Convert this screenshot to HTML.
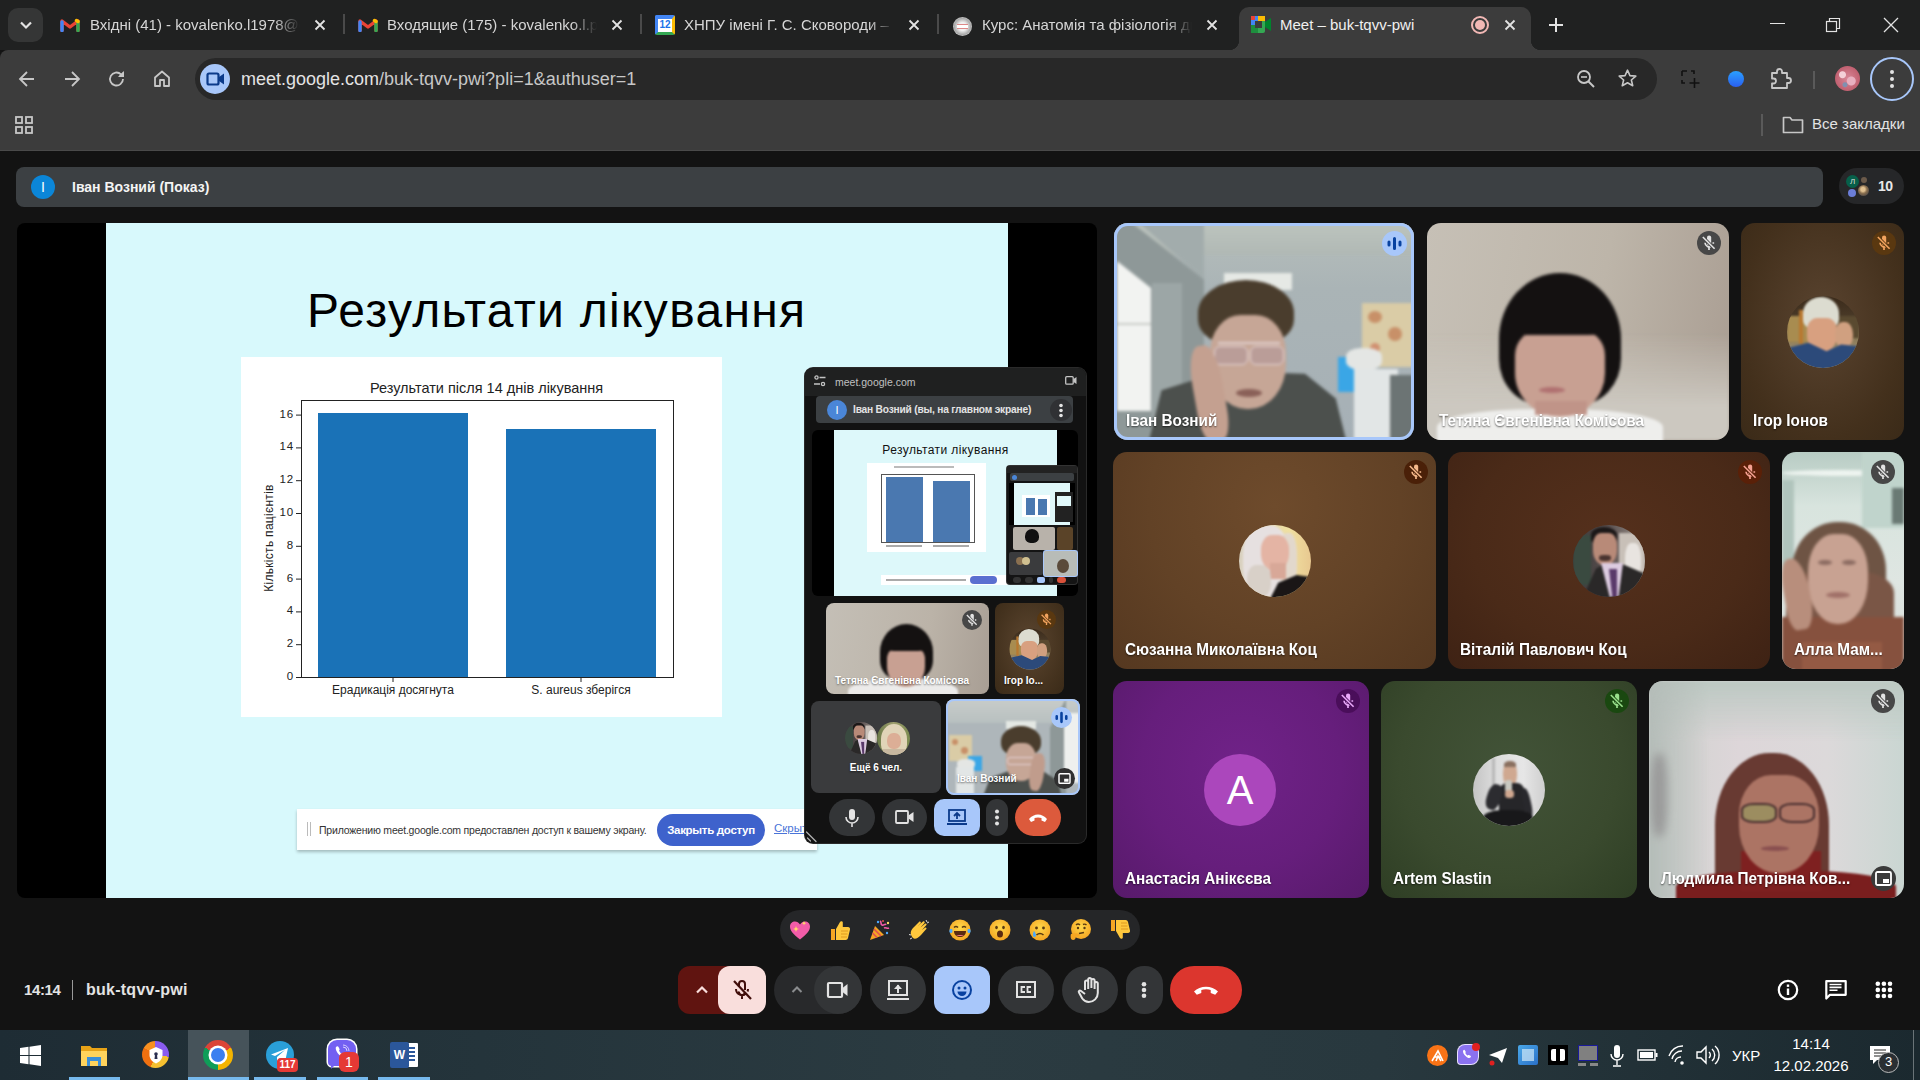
<!DOCTYPE html>
<html><head><meta charset="utf-8">
<style>
*{box-sizing:border-box;margin:0;padding:0}
html,body{width:1920px;height:1080px;overflow:hidden;background:#131313;font-family:"Liberation Sans",sans-serif}
.abs{position:absolute}
#tabs{left:0;top:0;width:1920px;height:50px;background:#202121}
#toolbar{left:0;top:50px;width:1920px;height:100px;background:#3c3c3c;border-top-left-radius:8px}
#meet{left:0;top:150px;width:1920px;height:880px;background:#131313}
#taskbar{left:0;top:1030px;width:1920px;height:50px;background:linear-gradient(90deg,#1e2c34 0%,#24343b 25%,#2b3b41 50%,#28383e 72%,#1b292f 100%)}
.tabtitle{color:#d6d6d6;font-size:15px;white-space:nowrap;overflow:hidden}
.x{color:#e3e3e3;font-size:18px}
.tile{border-radius:14px;overflow:hidden}
.av{width:72px;height:72px;border-radius:50%;overflow:hidden}
.name{font-size:17px;font-weight:bold;color:#fff;white-space:nowrap;text-shadow:0 1px 2px rgba(0,0,0,.6);transform:scaleX(0.9);transform-origin:0 0;line-height:20px}
.mute{width:24px;height:24px;border-radius:50%}
.mute svg{display:block}
.pname{font-size:10px;font-weight:bold;color:#fff;white-space:nowrap;text-shadow:0 1px 2px rgba(0,0,0,.5)}
.emo{font-size:24px;line-height:28px;width:26px;text-align:center}
.ytk{right:0;font-size:11.5px;letter-spacing:0.8px;color:#222;line-height:14px;text-align:right;white-space:nowrap}
</style></head><body>
<div id="tabs" class="abs">
  <div class="abs" style="left:8px;top:8px;width:35px;height:34px;border-radius:10px;background:#353636"></div>
  <svg class="abs" style="left:16px;top:16px" width="20" height="18" viewBox="0 0 20 18"><path d="M5 6.5l5 5 5-5" fill="none" stroke="#e3e3e3" stroke-width="2.2"/></svg>
  <!-- gmail icons -->
  <svg class="abs" style="left:60px;top:18px" width="20" height="14" viewBox="0 0 20 14"><path d="M2 12.5V3L10 9 18 3v9.5" fill="none" stroke="#ea4335" stroke-width="3.4" stroke-linejoin="round" stroke-linecap="round"/><path d="M2 12.5V4" stroke="#4285f4" stroke-width="3.4" stroke-linecap="round"/><path d="M18 12.5V4" stroke="#34a853" stroke-width="3.4" stroke-linecap="round"/><path d="M16.5 2.5L18 3.5" stroke="#fbbc04" stroke-width="3.4" stroke-linecap="round"/></svg>
  <div class="abs tabtitle" style="left:90px;top:16px;width:210px;-webkit-mask-image:linear-gradient(90deg,#000 88%,transparent)">Вхідні (41) - kovalenko.l1978@gmail</div>
  <svg class="abs x1" style="left:313px;top:18px" width="14" height="14" viewBox="0 0 14 14"><path d="M2.5 2.5l9 9M11.5 2.5l-9 9" stroke="#e3e3e3" stroke-width="1.8"/></svg>
  <div class="abs" style="left:343px;top:14px;width:2px;height:20px;background:#4a4a4a"></div>
  <svg class="abs" style="left:358px;top:18px" width="20" height="14" viewBox="0 0 20 14"><path d="M2 12.5V3L10 9 18 3v9.5" fill="none" stroke="#ea4335" stroke-width="3.4" stroke-linejoin="round" stroke-linecap="round"/><path d="M2 12.5V4" stroke="#4285f4" stroke-width="3.4" stroke-linecap="round"/><path d="M18 12.5V4" stroke="#34a853" stroke-width="3.4" stroke-linecap="round"/><path d="M16.5 2.5L18 3.5" stroke="#fbbc04" stroke-width="3.4" stroke-linecap="round"/></svg>
  <div class="abs tabtitle" style="left:387px;top:16px;width:210px;-webkit-mask-image:linear-gradient(90deg,#000 88%,transparent)">Входящие (175) - kovalenko.l.p</div>
  <svg class="abs" style="left:610px;top:18px" width="14" height="14" viewBox="0 0 14 14"><path d="M2.5 2.5l9 9M11.5 2.5l-9 9" stroke="#e3e3e3" stroke-width="1.8"/></svg>
  <div class="abs" style="left:640px;top:14px;width:2px;height:20px;background:#4a4a4a"></div>
  <!-- calendar icon -->
  <div class="abs" style="left:655px;top:15px;width:20px;height:20px;background:#fff;border-radius:2px;border-top:4px solid #4285f4;border-left:3px solid #4285f4;border-bottom:3px solid #34a853;border-right:3px solid #fbbc04"></div>
  <div class="abs" style="left:658px;top:18px;width:14px;font-size:10px;color:#1a73e8;text-align:center;font-weight:bold;line-height:14px">12</div>
  <div class="abs tabtitle" style="left:684px;top:16px;width:210px;-webkit-mask-image:linear-gradient(90deg,#000 88%,transparent)">ХНПУ імені Г. С. Сковороди – км</div>
  <svg class="abs" style="left:907px;top:18px" width="14" height="14" viewBox="0 0 14 14"><path d="M2.5 2.5l9 9M11.5 2.5l-9 9" stroke="#e3e3e3" stroke-width="1.8"/></svg>
  <div class="abs" style="left:937px;top:14px;width:2px;height:20px;background:#4a4a4a"></div>
  <div class="abs" style="left:953px;top:17px;width:19px;height:19px;border-radius:50%;background:radial-gradient(circle at 50% 50%,#f0f0f0 30%,#aaa 60%,#ccc 75%,#888)"></div><div class="abs" style="left:957px;top:24px;width:11px;height:5px;background:#fff;border-top:1px solid #d88;border-bottom:1px solid #d88"></div>
  <div class="abs tabtitle" style="left:982px;top:16px;width:210px;-webkit-mask-image:linear-gradient(90deg,#000 88%,transparent)">Курс: Анатомія та фізіологія дит</div>
  <svg class="abs" style="left:1205px;top:18px" width="14" height="14" viewBox="0 0 14 14"><path d="M2.5 2.5l9 9M11.5 2.5l-9 9" stroke="#e3e3e3" stroke-width="1.8"/></svg>
  <!-- active tab -->
  <div class="abs" style="left:1239px;top:7px;width:292px;height:43px;background:#3c3c3c;border-radius:10px 10px 0 0"></div>
  <div class="abs" style="left:1229px;top:40px;width:10px;height:10px;background:radial-gradient(circle at 0 0,#202121 10px,#3c3c3c 10.5px)"></div>
  <div class="abs" style="left:1531px;top:40px;width:10px;height:10px;background:radial-gradient(circle at 100% 0,#202121 10px,#3c3c3c 10.5px)"></div>
  <svg class="abs" style="left:1251px;top:16px" width="21" height="17" viewBox="0 0 21 17"><rect x="0" y="0" width="14" height="17" rx="2" fill="#34a853"/><rect x="0" y="0" width="7" height="9" fill="#4285f4"/><rect x="7" y="0" width="7" height="5" fill="#fbbc04"/><rect x="0" y="9" width="7" height="8" fill="#1e8e3e"/><rect x="4" y="5" width="7" height="7" fill="#3c3c3c"/><path d="M14 6l6-4v13l-6-4z" fill="#00832d"/><rect x="0" y="0" width="4" height="4" fill="#ea4335"/></svg>
  <div class="abs tabtitle" style="left:1280px;top:16px;width:180px;color:#f0f0f0">Meet – buk-tqvv-pwi</div>
  <div class="abs" style="left:1471px;top:16px;width:18px;height:18px;border-radius:50%;border:2px solid #f2b8b5"></div>
  <div class="abs" style="left:1475px;top:20px;width:10px;height:10px;border-radius:50%;background:#f2b8b5"></div>
  <svg class="abs" style="left:1503px;top:18px" width="14" height="14" viewBox="0 0 14 14"><path d="M2.5 2.5l9 9M11.5 2.5l-9 9" stroke="#e3e3e3" stroke-width="1.8"/></svg>
  <svg class="abs" style="left:1547px;top:16px" width="18" height="18" viewBox="0 0 18 18"><path d="M9 2v14M2 9h14" stroke="#e3e3e3" stroke-width="2"/></svg>
  <!-- window controls -->
  <div class="abs" style="left:1770px;top:23px;width:15px;height:1px;background:#e3e3e3"></div>
  <svg class="abs" style="left:1824px;top:16px" width="18" height="18" viewBox="0 0 18 18"><rect x="2.5" y="5.5" width="10" height="10" fill="none" stroke="#e3e3e3" stroke-width="1.2"/><path d="M5.5 5.5V2.5h10v10h-3" fill="none" stroke="#e3e3e3" stroke-width="1.2"/></svg>
  <svg class="abs" style="left:1882px;top:16px" width="18" height="18" viewBox="0 0 18 18"><path d="M2 2l14 14M16 2L2 16" stroke="#e3e3e3" stroke-width="1.3"/></svg>
</div>
<div id="toolbar" class="abs">
  <svg class="abs" style="left:17px;top:19px" width="20" height="20" viewBox="0 0 20 20"><path d="M17 10H3M10 3l-7 7 7 7" fill="none" stroke="#c7c7c7" stroke-width="1.8"/></svg>
  <svg class="abs" style="left:62px;top:19px" width="20" height="20" viewBox="0 0 20 20"><path d="M3 10h14M10 3l7 7-7 7" fill="none" stroke="#c7c7c7" stroke-width="1.8"/></svg>
  <svg class="abs" style="left:107px;top:19px" width="20" height="20" viewBox="0 0 20 20"><path d="M16 10a6.5 6.5 0 1 1-2-4.7" fill="none" stroke="#c7c7c7" stroke-width="1.8"/><path d="M16.5 2.5v5h-5" fill="#c7c7c7"/><path d="M11 8h6V2z" fill="#c7c7c7"/></svg>
  <svg class="abs" style="left:152px;top:19px" width="20" height="20" viewBox="0 0 20 20"><path d="M3 17V8.5L10 2.5l7 6V17h-5v-6H8v6z" fill="none" stroke="#c7c7c7" stroke-width="1.8" stroke-linejoin="round"/></svg>
  <div class="abs" style="left:195px;top:8px;width:1462px;height:42px;border-radius:21px;background:#282828"></div>
  <div class="abs" style="left:200px;top:64px;width:0;height:0"></div>
  <div class="abs" style="left:200px;top:14px;width:30px;height:30px;border-radius:50%;background:#a8c7fa"></div>
  <svg class="abs" style="left:206px;top:21px" width="19" height="16" viewBox="0 0 19 16"><rect x="1.5" y="2.5" width="11" height="11" rx="1.5" fill="none" stroke="#0b3a8a" stroke-width="2.2"/><path d="M13 6l5-3.5v11L13 10z" fill="#0b3a8a"/></svg>
  <div class="abs" style="left:241px;top:19px;font-size:18px;color:#e3e3e3;white-space:nowrap">meet.google.com<span style="color:#c7c7c7">/buk-tqvv-pwi?pli=1&amp;authuser=1</span></div>
  <svg class="abs" style="left:1576px;top:19px" width="20" height="20" viewBox="0 0 20 20"><circle cx="8" cy="8" r="6" fill="none" stroke="#c7c7c7" stroke-width="1.8"/><path d="M12.5 12.5l5.5 5.5" stroke="#c7c7c7" stroke-width="2"/><path d="M5 8h6" stroke="#c7c7c7" stroke-width="1.6"/></svg>
  <svg class="abs" style="left:1617px;top:18px" width="21" height="21" viewBox="0 0 24 24"><path d="M12 2.5l2.8 6.2 6.7.6-5.1 4.4 1.6 6.6L12 16.8l-6 3.5 1.6-6.6-5.1-4.4 6.7-.6z" fill="none" stroke="#c7c7c7" stroke-width="1.8" stroke-linejoin="round"/></svg>
  <svg class="abs" style="left:1681px;top:20px" width="20" height="19" viewBox="0 0 20 19"><path d="M1 1h5M1 1v5M10 1h3v3M1 10v3h3" fill="none" stroke="#111" stroke-width="1.6"/><path d="M13.5 8v10M8.5 13h10" stroke="#111" stroke-width="1.6"/></svg>
  <div class="abs" style="left:1728px;top:21px;width:16px;height:16px;border-radius:50%;background:linear-gradient(180deg,#2aa0ff,#2a5ff0)"></div>
  <svg class="abs" style="left:1769px;top:18px" width="24" height="22" viewBox="0 0 24 22"><path d="M3 5h5V3.5a2.5 2.5 0 0 1 5 0V5h5v5h1.5a2.5 2.5 0 0 1 0 5H18v5H3v-4.5h1.5a2.5 2.5 0 0 0 0-5H3z" fill="none" stroke="#c7c7c7" stroke-width="1.8" stroke-linejoin="round"/></svg>
  <div class="abs" style="left:1813px;top:21px;width:2px;height:18px;background:#5a5a5a"></div>
  <div class="abs" style="left:1835px;top:16px;width:25px;height:25px;border-radius:50%;background:radial-gradient(circle at 30% 35%,#f4d0d8 0 3px,transparent 4px),radial-gradient(circle at 65% 60%,#e8b0c0 0 4px,transparent 5px),radial-gradient(circle at 40% 75%,#8090b0 0 2px,transparent 3px),radial-gradient(circle,#d88898,#c06070 70%,#a05060)"></div>
  <div class="abs" style="left:1870px;top:7px;width:44px;height:44px;border-radius:50%;border:2px solid #a8c7fa"></div>
  <svg class="abs" style="left:1889px;top:19px" width="6" height="20" viewBox="0 0 6 20"><circle cx="3" cy="3" r="2" fill="#e3e3e3"/><circle cx="3" cy="10" r="2" fill="#e3e3e3"/><circle cx="3" cy="17" r="2" fill="#e3e3e3"/></svg>
  <!-- bookmarks -->
  <svg class="abs" style="left:15px;top:66px" width="19" height="19" viewBox="0 0 19 19"><g fill="none" stroke="#c7c7c7" stroke-width="1.8"><rect x="1" y="1" width="6" height="6"/><rect x="11" y="1" width="6" height="6"/><rect x="1" y="11" width="6" height="6"/><rect x="11" y="11" width="6" height="6"/></g></svg>
  <div class="abs" style="left:1761px;top:64px;width:2px;height:22px;background:#5a5a5a"></div>
  <svg class="abs" style="left:1782px;top:65px" width="22" height="19" viewBox="0 0 22 19"><path d="M1.5 2.5h6.5l2 2.5h10.5v12.5H1.5z" fill="none" stroke="#c7c7c7" stroke-width="1.7" stroke-linejoin="round"/></svg>
  <div class="abs" style="left:1812px;top:65px;font-size:15px;color:#e3e3e3;white-space:nowrap">Все закладки</div>
</div>

<div id="meet" class="abs"></div>
<div class="abs" style="left:0;top:150px;width:1920px;height:1px;background:#4a4a4a"></div>
<!-- banner -->
<div class="abs" style="left:16px;top:167px;width:1807px;height:40px;border-radius:8px;background:#3c4043"></div>
<div class="abs" style="left:31px;top:175px;width:24px;height:24px;border-radius:50%;background:#0b86d8;color:#fff;font-size:14px;text-align:center;line-height:24px">I</div>
<div class="abs" style="left:72px;top:179px;font-size:14px;font-weight:bold;color:#f4f4f4;white-space:nowrap">Іван Возний (Показ)</div>
<!-- participants pill -->
<div class="abs" style="left:1839px;top:168px;width:65px;height:36px;border-radius:18px;background:#262729"></div>
<div class="abs" style="left:1846px;top:175px;width:13px;height:13px;border-radius:50%;background:#07604a;color:#ddd;font-size:8px;text-align:center;line-height:13px">Л</div>
<div class="abs" style="left:1861px;top:177px;width:6px;height:6px;border-radius:50%;background:#6b5a4a"></div>
<div class="abs" style="left:1848px;top:189px;width:8px;height:8px;border-radius:50%;background:#6b7ed8"></div>
<div class="abs" style="left:1858px;top:185px;width:11px;height:11px;border-radius:50%;background:radial-gradient(circle at 45% 40%,#e0c090 0 2px,#8a7050 4px,#2a3040)"></div>
<div class="abs" style="left:1878px;top:178px;font-size:14px;font-weight:bold;color:#e8e8e8;letter-spacing:-0.5px">10</div>

<!-- main presentation tile -->
<div class="abs" style="left:17px;top:223px;width:1080px;height:675px;border-radius:8px;background:#000;overflow:hidden">
  <div class="abs" style="left:89px;top:0;width:902px;height:675px;background:#d8f9fc">
    <div class="abs" style="left:201px;top:60px;font-size:48px;color:#000;white-space:nowrap;letter-spacing:1.3px">Результати лікування</div>
    <!-- chart -->
    <div class="abs" style="left:135px;top:134px;width:481px;height:360px;background:#fff"></div>
    <div class="abs" style="left:140px;top:157px;width:481px;text-align:center;font-size:14.5px;color:#222;white-space:nowrap">Результати після 14 днів лікування</div>
    <div class="abs" style="left:195px;top:177px;width:373px;height:278px;border:1px solid #222"></div>
    <div class="abs" style="left:212px;top:190px;width:150px;height:264px;background:#1a72b7"></div>
    <div class="abs" style="left:400px;top:206px;width:150px;height:248px;background:#1a72b7"></div>
    <div class="abs" style="left:151px;top:0;width:37px;height:0">
      <div class="abs ytk" style="top:446px">0</div>
      <div class="abs ytk" style="top:413px">2</div>
      <div class="abs ytk" style="top:380px">4</div>
      <div class="abs ytk" style="top:348px">6</div>
      <div class="abs ytk" style="top:315px">8</div>
      <div class="abs ytk" style="top:282px">10</div>
      <div class="abs ytk" style="top:249px">12</div>
      <div class="abs ytk" style="top:216px">14</div>
      <div class="abs ytk" style="top:184px">16</div>
    </div>
    <svg class="abs" style="left:189px;top:180px" width="8" height="280" viewBox="0 0 8 280"><g stroke="#222" stroke-width="1">
      <path d="M1 274.5h6M1 241.7h6M1 208.9h6M1 176.1h6M1 143.3h6M1 110.5h6M1 77.7h6M1 44.9h6M1 12.1h6"/></g></svg>
    <svg class="abs" style="left:280px;top:454px" width="200" height="8"><path d="M7 0v5M195 0v5" stroke="#222" stroke-width="1"/></svg>
    <div class="abs" style="left:163px;top:316px;width:0;height:0"><div class="abs" style="left:-60px;top:-8px;width:120px;text-align:center;font-size:12px;letter-spacing:0.3px;color:#222;white-space:nowrap;transform:rotate(-90deg)">Кількість пацієнтів</div></div>
    <div class="abs" style="left:207px;top:460px;width:160px;text-align:center;font-size:12px;color:#222;white-space:nowrap">Ерадикація досягнута</div>
    <div class="abs" style="left:395px;top:460px;width:160px;text-align:center;font-size:12px;color:#222;white-space:nowrap">S. aureus зберігся</div>
    <!-- share bar -->
    <div class="abs" style="left:191px;top:586px;width:520px;height:41px;background:#fff;box-shadow:0 2px 3px rgba(0,0,0,.25)"></div>
    <div class="abs" style="left:201px;top:599px;width:1px;height:14px;background:#bbb;box-shadow:3px 0 0 #bbb"></div>
    <div class="abs" style="left:213px;top:601px;font-size:10.5px;letter-spacing:-0.2px;color:#333;white-space:nowrap">Приложению meet.google.com предоставлен доступ к вашему экрану.</div>
    <div class="abs" style="left:551px;top:591px;width:108px;height:32px;border-radius:16px;background:#3e62cc;color:#fff;font-size:11.5px;letter-spacing:-0.3px;font-weight:bold;text-align:center;line-height:32px;white-space:nowrap">Закрыть доступ</div>
    <div class="abs" style="left:668px;top:599px;font-size:11.5px;color:#4a74d8;text-decoration:underline;white-space:nowrap">Скрыть</div>
  </div>
</div>
<!-- right grid -->
<!-- R1T1 Ivan -->
<div class="abs tile" style="left:1114px;top:223px;width:300px;height:217px;background:linear-gradient(180deg,#b6bebb 0%,#aab4b6 30%,#a6b0b6 100%)">
  <div class="abs" style="left:0;top:0;width:300px;height:217px;filter:blur(1.5px)">
    <div class="abs" style="left:0;top:0;width:300px;height:32px;background:linear-gradient(180deg,#bcc4be,#b0b8b4)"></div>
    <div class="abs" style="left:0;top:0;width:90px;height:217px;background:#8e9898;clip-path:polygon(0 0,20% 0,100% 26%,100% 100%,0 100%)"></div>
    <div class="abs" style="left:0;top:0;width:90px;height:217px;background:#a2acac;clip-path:polygon(28% 0,100% 0,100% 26%)"></div>
    <div class="abs" style="left:38px;top:60px;width:30px;height:157px;background:#9ca6a6"></div>
    <div class="abs" style="left:3px;top:38px;width:34px;height:150px;background:#f2f3f1;clip-path:polygon(0 0,100% 18%,100% 100%,0 100%)"></div>
    <div class="abs" style="left:3px;top:100px;width:34px;height:2px;background:#c8ccc8"></div>
    <div class="abs" style="left:110px;top:50px;width:68px;height:17px;background:#e6e9e5"></div>
    <div class="abs" style="left:248px;top:80px;width:52px;height:64px;background:#dacca6"></div>
    <div class="abs" style="left:254px;top:88px;width:14px;height:12px;border-radius:50%;background:#c89068"></div>
    <div class="abs" style="left:274px;top:104px;width:14px;height:14px;border-radius:50%;background:#c89068"></div>
    <div class="abs" style="left:256px;top:120px;width:10px;height:10px;border-radius:50%;background:#d09070"></div>
    <div class="abs" style="left:224px;top:134px;width:22px;height:35px;background:#3aa6e6"></div>
    <div class="abs" style="left:232px;top:125px;width:36px;height:22px;border-radius:40%;background:#e4e6e4"></div>
    <div class="abs" style="left:240px;top:146px;width:44px;height:71px;background:#e2e6e6"></div>
    <div class="abs" style="left:276px;top:152px;width:24px;height:65px;background:#6c7474"></div>
    <div class="abs" style="left:27px;top:148px;width:205px;height:69px;background:#4c504d;clip-path:polygon(4% 100%,10% 28%,40% 0,80% 4%,95% 40%,100% 100%)"></div>
    <div class="abs" style="left:84px;top:57px;width:96px;height:66px;border-radius:50% 50% 40% 40%;background:#4a3d2d"></div>
    <div class="abs" style="left:96px;top:92px;width:76px;height:94px;border-radius:40% 40% 48% 48%;background:#c6a696"></div>
    <div class="abs" style="left:100px;top:123px;width:34px;height:19px;border-radius:6px;border:1.5px solid #e8d8da;background:rgba(150,130,160,.25)"></div><div class="abs" style="left:136px;top:123px;width:34px;height:19px;border-radius:6px;border:1.5px solid #e8d8da;background:rgba(150,130,160,.25)"></div><div class="abs" style="left:104px;top:119px;width:62px;height:2px;background:#e0d0d0"></div>
    <div class="abs" style="left:80px;top:122px;width:30px;height:96px;border-radius:40% 40% 30% 30%;background:#c4a090;transform:rotate(-10deg)"></div>
    <div class="abs" style="left:122px;top:166px;width:26px;height:8px;border-radius:50%;background:#8a6058"></div>
  </div>
</div>
<div class="abs" style="left:1114px;top:223px;width:300px;height:217px;border-radius:14px;box-shadow:inset 0 0 0 3px #a8c7fa"></div>
<div class="abs" style="left:1382px;top:231px;width:25px;height:25px;border-radius:50%;background:#a8c7fa"></div>
<svg class="abs" style="left:1386px;top:236px" width="17" height="15" viewBox="0 0 17 15"><g stroke="#0842a0" stroke-width="3" stroke-linecap="round"><path d="M3 6v3M8.5 2.5v10M14 6v3"/></g></svg>
<div class="abs name" style="left:1126px;top:411px">Іван Возний</div>

<!-- R1T2 Tetyana -->
<div class="abs tile" style="left:1427px;top:223px;width:302px;height:217px;background:linear-gradient(100deg,#c6c0b6 0%,#bdb5a9 55%,#a99d92 100%)">
  <div class="abs" style="left:0;top:0;width:302px;height:217px;filter:blur(1.5px)">
    <div class="abs" style="left:0;top:110px;width:302px;height:107px;background:linear-gradient(180deg,rgba(204,200,192,0),#ccc8c0 70%)"></div>
    <div class="abs" style="left:10px;top:186px;width:226px;height:40px;border-radius:45% 45% 0 0;background:#eeeeec"></div>
    <div class="abs" style="left:72px;top:50px;width:122px;height:132px;border-radius:50% 50% 35% 35%;background:#141111"></div>
    <div class="abs" style="left:88px;top:106px;width:90px;height:88px;border-radius:30% 30% 50% 50%;background:#c8a092"></div>
    <div class="abs" style="left:86px;top:96px;width:94px;height:16px;border-radius:50% 50% 20% 20%;background:#141111"></div>
    <div class="abs" style="left:108px;top:178px;width:52px;height:14px;background:#c09488"></div>
    <div class="abs" style="left:112px;top:164px;width:26px;height:6px;border-radius:50%;background:#b07070"></div>
  </div>
</div>
<div class="abs mute" style="left:1697px;top:231px;background:#474747;color:#e3e3e3;--bg:#474747"><svg width="24" height="24"><use href="#micoff"/></svg></div>
<div class="abs name" style="left:1439px;top:411px">Тетяна Євгенівна Комісова</div>

<!-- R1T3 Igor -->
<div class="abs tile" style="left:1741px;top:223px;width:163px;height:217px;background:radial-gradient(ellipse at 50% 45%,#5a4430,#43301c 70%,#3a2a18)"></div>
<div class="abs av" style="left:1787px;top:296px;background:linear-gradient(180deg,#3a2a1a 0%,#4a3a28 30%,#8a7a58 60%,#c0b090)">
  <div class="abs" style="left:0;top:0;width:72px;height:72px;filter:blur(0.8px)">
    <div class="abs" style="left:0;top:20px;width:22px;height:26px;background:#a88c50"></div>
    <div class="abs" style="left:12px;top:14px;width:4px;height:34px;background:#b87830"></div>
    <div class="abs" style="left:50px;top:20px;width:22px;height:22px;background:#5a4a30"></div>
    <div class="abs" style="left:16px;top:1px;width:36px;height:32px;border-radius:50% 50% 30% 30%;background:#dcdcd0"></div>
    <div class="abs" style="left:20px;top:22px;width:30px;height:34px;border-radius:35% 35% 48% 48%;background:#d8a080"></div>
    <div class="abs" style="left:48px;top:26px;width:18px;height:26px;border-radius:45%;background:#d0a080"></div>
    <div class="abs" style="left:0;top:40px;width:72px;height:34px;background:#2c4a7a;clip-path:polygon(0 35%,30% 20%,55% 45%,75% 25%,100% 30%,100% 100%,0 100%)"></div>
  </div>
</div>
<div class="abs mute" style="left:1872px;top:231px;background:#5a3810;color:#f2a35e;--bg:#5a3810"><svg width="24" height="24"><use href="#micoff"/></svg></div>
<div class="abs name" style="left:1753px;top:411px">Ігор Іонов</div>

<!-- R2T1 Suzanna -->
<div class="abs tile" style="left:1113px;top:452px;width:323px;height:217px;background:radial-gradient(ellipse at 50% 25%,#6e4b2c,#624226 55%,#553820)"></div>
<div class="abs av" style="left:1239px;top:525px;background:linear-gradient(90deg,#d8d0c0,#f0e0a0 70%,#e8c890)">
  <div class="abs" style="left:0;top:0;width:72px;height:72px;filter:blur(1px)">
    <div class="abs" style="left:4px;top:0;width:46px;height:72px;border-radius:40%;background:#e6e0e0"></div>
    <div class="abs" style="left:40px;top:8px;width:18px;height:56px;border-radius:40%;background:#e2d8cc"></div>
    <div class="abs" style="left:22px;top:10px;width:28px;height:36px;border-radius:40% 40% 48% 48%;background:#e4b4a4"></div>
    <div class="abs" style="left:31px;top:38px;width:16px;height:16px;background:#d8a898"></div>
    <div class="abs" style="left:30px;top:50px;width:46px;height:26px;background:#1a1616;clip-path:polygon(20% 30%,60% 0,100% 10%,100% 100%,0 100%)"></div>
    <div class="abs" style="left:8px;top:40px;width:24px;height:32px;border-radius:40%;background:#d8d0c8"></div>
  </div>
</div>
<div class="abs mute" style="left:1404px;top:460px;background:#4a2008;color:#f5b88a;--bg:#4a2008"><svg width="24" height="24"><use href="#micoff"/></svg></div>
<div class="abs name" style="left:1125px;top:640px">Сюзанна Миколаївна Коц</div>

<!-- R2T2 Vitaliy -->
<div class="abs tile" style="left:1448px;top:452px;width:322px;height:217px;background:radial-gradient(ellipse at 50% 40%,#55301c,#4a2a18 60%,#3e2214)"></div>
<div class="abs av" style="left:1573px;top:525px;background:linear-gradient(90deg,#3a3838,#5a5050 50%,#a09890)">
  <div class="abs" style="left:0;top:0;width:72px;height:72px;filter:blur(0.8px)">
    <div class="abs" style="left:0;top:10px;width:18px;height:50px;background:#3a4a40"></div>
    <div class="abs" style="left:46px;top:8px;width:26px;height:50px;background:#c8c0b8"></div>
    <div class="abs" style="left:52px;top:18px;width:16px;height:36px;border-radius:40%;background:#e8e4e0"></div>
    <div class="abs" style="left:18px;top:2px;width:26px;height:16px;border-radius:50% 50% 20% 20%;background:#1c1818"></div>
    <div class="abs" style="left:20px;top:8px;width:24px;height:32px;border-radius:35% 35% 45% 45%;background:#b88a78"></div>
    <div class="abs" style="left:26px;top:30px;width:12px;height:6px;border-radius:40%;background:#4a3430"></div>
    <div class="abs" style="left:2px;top:38px;width:70px;height:36px;background:#2a2828;clip-path:polygon(10% 100%,30% 15%,45% 0,70% 5%,100% 30%,100% 100%)"></div>
    <div class="abs" style="left:28px;top:38px;width:22px;height:34px;background:#dccbe0;clip-path:polygon(0 0,100% 0,80% 100%,40% 100%)"></div>
    <div class="abs" style="left:36px;top:44px;width:8px;height:28px;background:#5a3a6a;clip-path:polygon(0 0,100% 0,100% 100%,40% 100%)"></div>
  </div>
</div>
<div class="abs mute" style="left:1738px;top:460px;background:#5a2008;color:#f5a090;--bg:#5a2008"><svg width="24" height="24"><use href="#micoff"/></svg></div>
<div class="abs name" style="left:1460px;top:640px">Віталій Павлович Коц</div>

<!-- R2T3 Alla -->
<div class="abs tile" style="left:1782px;top:452px;width:122px;height:217px;background:linear-gradient(180deg,#b8ccc4 0%,#d8e4de 25%,#dfe6e2 60%,#d8dcd8 100%)">
  <div class="abs" style="left:0;top:0;width:122px;height:217px;filter:blur(1.5px)">
    <div class="abs" style="left:0;top:18px;width:122px;height:6px;border-radius:50%;background:#eef4f0"></div>
    <div class="abs" style="left:0;top:28px;width:12px;height:100px;background:#b0c4bc"></div>
    <div class="abs" style="left:80px;top:0;width:42px;height:76px;background:#c0d4cc"></div>
    <div class="abs" style="left:110px;top:36px;width:12px;height:36px;background:#6a7a74"></div>
    <div class="abs" style="left:10px;top:70px;width:94px;height:100px;border-radius:48% 48% 20% 20%;background:#6e5444"></div>
    <div class="abs" style="left:4px;top:120px;width:108px;height:70px;border-radius:30%;background:#7a5646"></div>
    <div class="abs" style="left:0;top:165px;width:122px;height:60px;background:#86513e"></div>
    <div class="abs" style="left:20px;top:190px;width:80px;height:30px;background:#945a44"></div>
    <div class="abs" style="left:26px;top:82px;width:60px;height:90px;border-radius:42% 42% 48% 48%;background:#c8a292"></div>
    <div class="abs" style="left:44px;top:140px;width:24px;height:6px;border-radius:50%;background:#a07068"></div>
    <div class="abs" style="left:36px;top:108px;width:14px;height:5px;border-radius:50%;background:#8a6a60"></div>
    <div class="abs" style="left:60px;top:108px;width:14px;height:5px;border-radius:50%;background:#8a6a60"></div>
    <div class="abs" style="left:2px;top:106px;width:26px;height:72px;border-radius:40% 50% 40% 30%;background:#b88e7c;transform:rotate(-10deg)"></div>
  </div>
</div>
<div class="abs mute" style="left:1871px;top:460px;background:#474747;color:#e3e3e3;--bg:#474747"><svg width="24" height="24"><use href="#micoff"/></svg></div>
<div class="abs name" style="left:1794px;top:640px">Алла Мам...</div>

<!-- R3T1 Anastasia -->
<div class="abs tile" style="left:1113px;top:681px;width:256px;height:217px;background:radial-gradient(ellipse at 50% 40%,#702288,#661e7c 55%,#571a6a)"></div>
<div class="abs" style="left:1204px;top:754px;width:72px;height:72px;border-radius:50%;background:#ab47bc;color:#fff;font-size:40px;line-height:72px;text-align:center">A</div>
<div class="abs mute" style="left:1336px;top:689px;background:#4a0e5a;color:#e8a8f8;--bg:#4a0e5a"><svg width="24" height="24"><use href="#micoff"/></svg></div>
<div class="abs name" style="left:1125px;top:869px">Анастасія Анікєєва</div>

<!-- R3T2 Artem -->
<div class="abs tile" style="left:1381px;top:681px;width:256px;height:217px;background:radial-gradient(ellipse at 50% 40%,#425338,#3a4a2e 60%,#2e3e24)"></div>
<div class="abs av" style="left:1473px;top:754px;background:linear-gradient(90deg,#c4c4c4,#dcdcdc 30%,#e6e6e6 70%,#cfcfcf)">
  <div class="abs" style="left:0;top:0;width:72px;height:72px;filter:blur(0.8px)">
    <div class="abs" style="left:19px;top:4px;width:3px;height:64px;background:#b8b8b8"></div>
    <div class="abs" style="left:30px;top:7px;width:14px;height:26px;border-radius:45%;background:#cfa890"></div>
    <div class="abs" style="left:31px;top:7px;width:12px;height:6px;border-radius:50% 50% 0 0;background:#8a7060"></div>
    <div class="abs" style="left:26px;top:29px;width:26px;height:34px;border-radius:30% 30% 10% 10%;background:#262629"></div>
    <div class="abs" style="left:14px;top:30px;width:14px;height:26px;border-radius:40%;background:#2c2c30;transform:rotate(18deg)"></div>
    <div class="abs" style="left:50px;top:34px;width:8px;height:30px;border-radius:40%;background:#28282c;transform:rotate(-12deg)"></div>
    <div class="abs" style="left:32px;top:26px;width:7px;height:12px;border-radius:2px;background:#c8c8c0"></div>
    <div class="abs" style="left:32px;top:36px;width:9px;height:8px;border-radius:40%;background:#d0a890"></div>
    <div class="abs" style="left:10px;top:56px;width:50px;height:20px;border-radius:40% 40% 0 0;background:#18181a"></div>
  </div>
</div>
<div class="abs mute" style="left:1605px;top:689px;background:#1a4810;color:#98e08a;--bg:#1a4810"><svg width="24" height="24"><use href="#micoff"/></svg></div>
<div class="abs name" style="left:1393px;top:869px">Artem Slastin</div>

<!-- R3T3 Ludmila -->
<div class="abs tile" style="left:1649px;top:681px;width:255px;height:217px;background:linear-gradient(90deg,#cfd2ce 0%,#ddd6d9 35%,#dcd9da 70%,#cad6d2 100%)">
  <div class="abs" style="left:0;top:0;width:255px;height:217px;filter:blur(1.2px)">
    <div class="abs" style="left:0;top:0;width:255px;height:60px;background:linear-gradient(180deg,#bcc8c2,rgba(220,216,218,0))"></div>
    <div class="abs" style="left:0;top:0;width:60px;height:217px;background:linear-gradient(90deg,#b4bcb8,rgba(200,200,200,0))"></div>
    <div class="abs" style="left:2px;top:72px;width:16px;height:84px;border-radius:40%;background:#9a9a9a;filter:blur(4px)"></div>
    <div class="abs" style="left:66px;top:72px;width:114px;height:150px;border-radius:48% 48% 15% 15%;background:#683a32"></div>
    <div class="abs" style="left:27px;top:190px;width:220px;height:40px;border-radius:40% 40% 0 0;background:#7a1e1e"></div>
    <div class="abs" style="left:92px;top:170px;width:80px;height:40px;background:#7e2020"></div>
    <div class="abs" style="left:90px;top:94px;width:80px;height:98px;border-radius:40% 40% 48% 48%;background:#ac7464"></div>
    <div class="abs" style="left:92px;top:122px;width:36px;height:20px;border-radius:35%;border:2px solid #4a3030;background:rgba(120,200,90,.3)"></div>
    <div class="abs" style="left:130px;top:122px;width:36px;height:20px;border-radius:35%;border:2px solid #4a3030"></div>
    <div class="abs" style="left:112px;top:165px;width:28px;height:5px;border-radius:50%;background:#8a5050"></div>
  </div>
</div>
<div class="abs mute" style="left:1871px;top:689px;background:#474747;color:#e3e3e3;--bg:#474747"><svg width="24" height="24"><use href="#micoff"/></svg></div>
<div class="abs" style="left:1871px;top:866px;width:25px;height:25px;border-radius:50%;background:#3a3a3a"></div>
<svg class="abs" style="left:1875px;top:871px" width="17" height="15" viewBox="0 0 17 15"><rect x="1" y="1" width="15" height="13" rx="1.5" fill="none" stroke="#fff" stroke-width="1.8"/><path d="M8 8h6v4H8z" fill="#fff"/></svg>
<div class="abs name" style="left:1661px;top:869px">Людмила Петрівна Ков...</div>
<!-- PiP window -->
<div class="abs" style="left:805px;top:368px;width:281px;height:475px;border-radius:8px;background:#121212;overflow:hidden;box-shadow:0 0 0 1px #2a2a2a">
  <div class="abs" style="left:0;top:0;width:281px;height:28px;background:#1f2020"></div>
  <svg class="abs" style="left:9px;top:7px" width="12" height="12" viewBox="0 0 12 12"><g fill="none" stroke="#c4c4c4" stroke-width="1.3"><circle cx="2.5" cy="2.5" r="1.6"/><path d="M5.5 2.5h6M0 9h6"/><circle cx="9" cy="9" r="1.6"/></g></svg>
  <div class="abs" style="left:30px;top:8px;font-size:10.5px;color:#c0c0c0;white-space:nowrap">meet.google.com</div>
  <svg class="abs" style="left:260px;top:7px" width="12" height="11" viewBox="0 0 12 11"><rect x="0.7" y="1.7" width="7.5" height="7.5" rx="1" fill="none" stroke="#c4c4c4" stroke-width="1.3"/><path d="M8.5 4l3-2v7l-3-2z" fill="#c4c4c4"/></svg>
  <!-- banner -->
  <div class="abs" style="left:11px;top:28px;width:257px;height:27px;border-radius:4px;background:#3c4043"></div>
  <div class="abs" style="left:22px;top:32px;width:20px;height:20px;border-radius:50%;background:#4a86d8;color:#fff;font-size:11px;line-height:20px;text-align:center">I</div>
  <div class="abs" style="left:48px;top:36px;font-size:10.2px;letter-spacing:-0.2px;font-weight:bold;color:#e3e3e3;white-space:nowrap">Іван Возний (вы, на главном экране)</div>
  <div class="abs" style="left:245px;top:31px;width:22px;height:22px;border-radius:50%;background:#303134"></div>
  <svg class="abs" style="left:253px;top:35px" width="6" height="15" viewBox="0 0 6 15"><circle cx="3" cy="2.5" r="1.8" fill="#e3e3e3"/><circle cx="3" cy="7.5" r="1.8" fill="#e3e3e3"/><circle cx="3" cy="12.5" r="1.8" fill="#e3e3e3"/></svg>
  <!-- slide tile -->
  <div class="abs" style="left:7px;top:62px;width:266px;height:166px;border-radius:6px;background:#000;overflow:hidden">
    <div class="abs" style="left:22px;top:0;width:223px;height:166px;background:#ddf8fa">
      <div class="abs" style="left:0;top:13px;width:223px;text-align:center;font-size:12px;color:#111;white-space:nowrap;letter-spacing:.4px">Результати лікування</div>
      <div class="abs" style="left:33px;top:33px;width:119px;height:89px;background:#fff"></div>
      <div class="abs" style="left:47px;top:44px;width:94px;height:69px;border:1px solid #555"></div>
      <div class="abs" style="left:52px;top:47px;width:37px;height:65px;background:#4a78b0"></div>
      <div class="abs" style="left:99px;top:51px;width:37px;height:61px;background:#4a78b0"></div>
      <div class="abs" style="left:60px;top:36px;width:60px;height:2px;background:#bbb"></div>
      <div class="abs" style="left:52px;top:115px;width:36px;height:2px;background:#aaa"></div>
      <div class="abs" style="left:99px;top:115px;width:36px;height:2px;background:#aaa"></div>
      <div class="abs" style="left:47px;top:145px;width:127px;height:10px;background:#fff"></div>
      <div class="abs" style="left:52px;top:149px;width:80px;height:1.5px;background:#aaa"></div>
      <div class="abs" style="left:136px;top:146px;width:27px;height:8px;border-radius:4px;background:#5b6fd0"></div>
    </div>
    <!-- nested pip -->
    <div class="abs" style="left:195px;top:36px;width:70px;height:118px;border-radius:3px;background:#141414;box-shadow:0 0 0 1px #333">
      <div class="abs" style="left:0;top:0;width:70px;height:7px;background:#222"></div>
      <div class="abs" style="left:3px;top:7px;width:64px;height:8px;background:#3c4043;border-radius:2px"></div>
      <div class="abs" style="left:5px;top:9px;width:5px;height:5px;border-radius:50%;background:#4a86d8"></div>
      <div class="abs" style="left:2px;top:17px;width:66px;height:42px;background:#000"></div>
      <div class="abs" style="left:7px;top:17px;width:56px;height:42px;background:#e0f8fa"></div>
      <div class="abs" style="left:15px;top:29px;width:28px;height:22px;background:#fff"></div>
      <div class="abs" style="left:19px;top:32px;width:9px;height:17px;background:#4a78b0"></div>
      <div class="abs" style="left:31px;top:33px;width:9px;height:16px;background:#4a78b0"></div>
      <div class="abs" style="left:48px;top:26px;width:18px;height:30px;background:#222"></div>
      <div class="abs" style="left:50px;top:30px;width:14px;height:10px;background:#e0f8fa"></div>
      <div class="abs" style="left:6px;top:61px;width:42px;height:23px;background:#b8b2aa;border-radius:2px"></div>
      <div class="abs" style="left:18px;top:63px;width:14px;height:14px;border-radius:50% 50% 40% 40%;background:#111"></div>
      <div class="abs" style="left:50px;top:61px;width:16px;height:23px;background:#5a4328;border-radius:2px"></div>
      <div class="abs" style="left:2px;top:86px;width:34px;height:23px;background:#3a3b3d;border-radius:2px"></div>
      <div class="abs" style="left:9px;top:91px;width:8px;height:8px;border-radius:50%;background:#8a7050"></div>
      <div class="abs" style="left:15px;top:91px;width:8px;height:8px;border-radius:50%;background:#d0c090"></div>
      <div class="abs" style="left:37px;top:85px;width:33px;height:25px;background:#b8bcb8;border-radius:2px;box-shadow:0 0 0 1px #a8c7fa"></div>
      <div class="abs" style="left:50px;top:93px;width:12px;height:14px;border-radius:50%;background:#5a4a3a"></div>
      <div class="abs" style="left:6px;top:111px;width:8px;height:6px;border-radius:3px;background:#333"></div>
      <div class="abs" style="left:18px;top:111px;width:8px;height:6px;border-radius:3px;background:#333"></div>
      <div class="abs" style="left:30px;top:111px;width:8px;height:6px;border-radius:2px;background:#a8c7fa"></div>
      <div class="abs" style="left:42px;top:111px;width:4px;height:6px;border-radius:2px;background:#333"></div>
      <div class="abs" style="left:50px;top:111px;width:9px;height:6px;border-radius:3px;background:#d9513a"></div>
    </div>
  </div>
  <!-- tiles -->
  <div class="abs" id="pT" style="left:21px;top:235px;width:163px;height:91px;border-radius:8px;overflow:hidden;background:linear-gradient(100deg,#c4bfb6,#bbb3a8 60%,#a89e94)">
    <div class="abs" style="left:0;top:0;width:163px;height:91px;filter:blur(0.8px)">
    <div class="abs" style="left:22px;top:76px;width:110px;height:30px;border-radius:40% 40% 0 0;background:#ecebea"></div>
    <div class="abs" style="left:54px;top:21px;width:53px;height:56px;border-radius:50% 50% 35% 35%;background:#141111"></div>
    <div class="abs" style="left:61px;top:44px;width:38px;height:40px;border-radius:30% 30% 50% 50%;background:#c8a092"></div>
    <div class="abs" style="left:60px;top:40px;width:40px;height:8px;border-radius:50% 50% 20% 20%;background:#141111"></div>
    </div>
    <div class="abs" style="left:136px;top:7px;width:20px;height:20px;border-radius:50%;background:#474747"></div>
    <svg class="abs" style="left:136px;top:7px;color:#e3e3e3;--bg:#474747" width="20" height="20"><use href="#micoff"/></svg>
    <div class="abs pname" style="left:9px;top:72px">Тетяна Євгенівна Комісова</div>
  </div>
  <div class="abs" id="pI" style="left:190px;top:235px;width:69px;height:91px;border-radius:8px;overflow:hidden;background:radial-gradient(ellipse at 50% 45%,#5c4630,#44321e 70%,#3a2a18)">
    <div class="abs" style="left:14px;top:25px;width:41px;height:41px"><div class="abs av" style="left:-15.5px;top:-15px;transform:scale(0.57);background:linear-gradient(180deg,#3a2a1a 0%,#4a3a28 30%,#8a7a58 60%,#c0b090)">
  <div class="abs" style="left:0;top:0;width:72px;height:72px;filter:blur(0.8px)">
    <div class="abs" style="left:0;top:20px;width:22px;height:26px;background:#a88c50"></div>
    <div class="abs" style="left:12px;top:14px;width:4px;height:34px;background:#b87830"></div>
    <div class="abs" style="left:50px;top:20px;width:22px;height:22px;background:#5a4a30"></div>
    <div class="abs" style="left:16px;top:1px;width:36px;height:32px;border-radius:50% 50% 30% 30%;background:#dcdcd0"></div>
    <div class="abs" style="left:20px;top:22px;width:30px;height:34px;border-radius:35% 35% 48% 48%;background:#d8a080"></div>
    <div class="abs" style="left:48px;top:26px;width:18px;height:26px;border-radius:45%;background:#d0a080"></div>
    <div class="abs" style="left:0;top:40px;width:72px;height:34px;background:#2c4a7a;clip-path:polygon(0 35%,30% 20%,55% 45%,75% 25%,100% 30%,100% 100%,0 100%)"></div>
  </div>
</div></div>
    <div class="abs" style="left:42px;top:7px;width:19px;height:19px;border-radius:50%;background:#5a3810"></div>
    <svg class="abs" style="left:42px;top:7px;color:#f2a35e;--bg:#5a3810" width="19" height="19"><use href="#micoff"/></svg>
    <div class="abs pname" style="left:9px;top:72px">Ігор Іо...</div>
  </div>
  <div class="abs" style="left:6px;top:333px;width:130px;height:92px;border-radius:8px;background:#3a3b3d">
    <div class="abs" style="left:34px;top:21px;width:32px;height:32px"><div class="abs av" style="left:-20px;top:-20px;transform:scale(0.445);background:linear-gradient(90deg,#3a3838,#5a5050 50%,#a09890)">
  <div class="abs" style="left:0;top:0;width:72px;height:72px;filter:blur(0.8px)">
    <div class="abs" style="left:0;top:10px;width:18px;height:50px;background:#3a4a40"></div>
    <div class="abs" style="left:46px;top:8px;width:26px;height:50px;background:#c8c0b8"></div>
    <div class="abs" style="left:52px;top:18px;width:16px;height:36px;border-radius:40%;background:#e8e4e0"></div>
    <div class="abs" style="left:18px;top:2px;width:26px;height:16px;border-radius:50% 50% 20% 20%;background:#1c1818"></div>
    <div class="abs" style="left:20px;top:8px;width:24px;height:32px;border-radius:35% 35% 45% 45%;background:#b88a78"></div>
    <div class="abs" style="left:26px;top:30px;width:12px;height:6px;border-radius:40%;background:#4a3430"></div>
    <div class="abs" style="left:2px;top:38px;width:70px;height:36px;background:#2a2828;clip-path:polygon(10% 100%,30% 15%,45% 0,70% 5%,100% 30%,100% 100%)"></div>
    <div class="abs" style="left:28px;top:38px;width:22px;height:34px;background:#dccbe0;clip-path:polygon(0 0,100% 0,80% 100%,40% 100%)"></div>
    <div class="abs" style="left:36px;top:44px;width:8px;height:28px;background:#5a3a6a;clip-path:polygon(0 0,100% 0,100% 100%,40% 100%)"></div>
  </div>
</div></div>
    <div class="abs" style="left:66px;top:21px;width:33px;height:33px;border-radius:50%;overflow:hidden;background:linear-gradient(90deg,#6a7a48,#a0a070 50%,#7a8a50)">
      <div class="abs" style="left:4px;top:2px;width:26px;height:30px;border-radius:50% 50% 30% 30%;background:#e0d4b8;filter:blur(0.6px)"></div>
      <div class="abs" style="left:10px;top:11px;width:14px;height:16px;border-radius:45%;background:#dcae96;filter:blur(0.6px)"></div>
      <div class="abs" style="left:6px;top:27px;width:22px;height:8px;background:#c8b8a0"></div>
    </div>
    <div class="abs pname" style="left:0;top:61px;width:130px;text-align:center">Ещё 6 чел.</div>
  </div>
  <div class="abs" id="pV" style="left:141px;top:331px;width:134px;height:96px;border-radius:8px;overflow:hidden;background:#aeb6ba">
    <div class="abs" style="left:0;top:0;width:134px;height:96px;filter:blur(0.8px)">
    <div class="abs" style="left:0;top:0;width:134px;height:24px;background:linear-gradient(180deg,#c8ccca,#b8c0c0)"></div>
    <div class="abs" style="left:104px;top:0;width:16px;height:96px;background:#8e9898;clip-path:polygon(100% 0,100% 100%,0 100%,0 30%)"></div>
    <div class="abs" style="left:118px;top:14px;width:16px;height:70px;background:#eef0ee"></div>
    <div class="abs" style="left:60px;top:22px;width:30px;height:8px;background:#e4e8e4"></div>
    <div class="abs" style="left:3px;top:36px;width:23px;height:26px;background:#dacca6"></div>
    <div class="abs" style="left:6px;top:40px;width:6px;height:6px;border-radius:50%;background:#c89068"></div>
    <div class="abs" style="left:15px;top:48px;width:7px;height:7px;border-radius:50%;background:#c89068"></div>
    <div class="abs" style="left:22px;top:57px;width:14px;height:15px;background:#3aa6e6"></div>
    <div class="abs" style="left:11px;top:60px;width:18px;height:10px;border-radius:40%;background:#e4e6e4"></div>
    <div class="abs" style="left:10px;top:68px;width:18px;height:28px;background:#e2e6e6"></div>
    <div class="abs" style="left:36px;top:70px;width:80px;height:30px;background:#4c504d;clip-path:polygon(0 100%,10% 30%,40% 0,75% 5%,95% 40%,100% 100%)"></div>
    <div class="abs" style="left:55px;top:27px;width:40px;height:30px;border-radius:50% 50% 40% 40%;background:#4a3d2d"></div>
    <div class="abs" style="left:60px;top:44px;width:30px;height:38px;border-radius:40% 40% 48% 48%;background:#c6a696"></div>
    <div class="abs" style="left:61px;top:58px;width:28px;height:8px;border-radius:3px;border:1px solid #e4d0d4"></div>
    <div class="abs" style="left:84px;top:54px;width:14px;height:38px;border-radius:40%;background:#c09c8c;transform:rotate(8deg)"></div>
    </div>
    <div class="abs" style="left:0;top:0;width:134px;height:96px;border-radius:8px;box-shadow:inset 0 0 0 2px #a8c7fa"></div>
    <div class="abs" style="left:105px;top:8px;width:21px;height:21px;border-radius:50%;background:#a8c7fa"></div>
    <svg class="abs" style="left:108px;top:12px" width="15" height="13" viewBox="0 0 17 15"><g stroke="#0842a0" stroke-width="3" stroke-linecap="round"><path d="M3 6v3M8.5 2.5v10M14 6v3"/></g></svg>
    <div class="abs" style="left:108px;top:69px;width:21px;height:21px;border-radius:50%;background:#303030"></div>
    <svg class="abs" style="left:112px;top:74px" width="13" height="11" viewBox="0 0 17 15"><rect x="1" y="1" width="15" height="13" rx="1.5" fill="none" stroke="#fff" stroke-width="2"/><path d="M8 8h6v4H8z" fill="#fff"/></svg>
    <div class="abs pname" style="left:11px;top:74px">Іван Возний</div>
  </div>
  <svg class="abs" style="left:0;top:462px" width="14" height="14" viewBox="0 0 14 14"><path d="M1.5 2l9.5 9.5M2.5 8l3 3" stroke="#b0b0b0" stroke-width="1.3" stroke-linecap="round"/></svg>
  <!-- controls -->
  <div class="abs" style="left:24px;top:431px;width:46px;height:37px;border-radius:19px;background:#333537"></div>
  <svg class="abs" style="left:38px;top:440px" width="18" height="20" viewBox="0 0 18 20"><rect x="6" y="1" width="6" height="11" rx="3" fill="#e3e3e3"/><path d="M3 9a6 6 0 0 0 12 0M9 15v4" fill="none" stroke="#e3e3e3" stroke-width="1.6"/></svg>
  <div class="abs" style="left:77px;top:431px;width:45px;height:37px;border-radius:19px;background:#333537"></div>
  <svg class="abs" style="left:90px;top:441px" width="20" height="16" viewBox="0 0 20 16"><rect x="1" y="2" width="12" height="12" rx="1" fill="none" stroke="#e3e3e3" stroke-width="1.8"/><path d="M13.5 6.5l5-3.5v10l-5-3.5z" fill="#e3e3e3"/></svg>
  <div class="abs" style="left:129px;top:431px;width:46px;height:37px;border-radius:10px;background:#a8c7fa"></div>
  <svg class="abs" style="left:141px;top:440px" width="22" height="18" viewBox="0 0 22 18"><rect x="3" y="2" width="16" height="11" fill="none" stroke="#0b3a8a" stroke-width="1.8"/><path d="M1 16h20" stroke="#0b3a8a" stroke-width="1.8"/><path d="M11 11V5M8 8l3-3 3 3" fill="none" stroke="#0b3a8a" stroke-width="1.8"/></svg>
  <div class="abs" style="left:181px;top:431px;width:22px;height:37px;border-radius:11px;background:#333537"></div>
  <svg class="abs" style="left:189px;top:441px" width="6" height="17" viewBox="0 0 6 17"><circle cx="3" cy="2.5" r="2" fill="#e3e3e3"/><circle cx="3" cy="8.5" r="2" fill="#e3e3e3"/><circle cx="3" cy="14.5" r="2" fill="#e3e3e3"/></svg>
  <div class="abs" style="left:210px;top:431px;width:46px;height:37px;border-radius:19px;background:#dc5a3c"></div>
  <svg class="abs" style="left:222px;top:443px" width="22" height="12" viewBox="0 0 22 12"><path d="M2 8c5-6 13-6 18 0l-2 3-3.5-1.5V7c-2-.8-5-.8-7 0v2.5L4 11z" fill="#fff"/></svg>
</div>
<!-- emoji bar -->
<div class="abs" style="left:780px;top:910px;width:360px;height:40px;border-radius:20px;background:#252628"></div>
<svg width="0" height="0" style="position:absolute">
 <defs>
  <symbol id="micoff" viewBox="0 2 24 24"><rect x="10" y="6.5" width="4.2" height="10" rx="2.1" fill="currentColor"/><path d="M8 13.8a4.3 4.3 0 0 0 6.8 3.2M16.3 13.2v1.6M12 18.2V21" fill="none" stroke="currentColor" stroke-width="1.7"/><path d="M6 8.2l11.5 11.6" stroke="var(--bg)" stroke-width="3.2"/><path d="M5.8 8l11.8 11.8" stroke="currentColor" stroke-width="1.6"/></symbol>
  <radialGradient id="yf" cx="50%" cy="40%" r="60%"><stop offset="0" stop-color="#ffd84a"/><stop offset="1" stop-color="#f5a623"/></radialGradient>
 </defs>
</svg>
<!-- emojis -->
<svg class="abs" style="left:788px;top:918px" width="24" height="24" viewBox="0 0 24 24"><path d="M12 21.5C5 16 2 12.5 2 8.5 2 5.5 4.3 3.5 7 3.5c2 0 3.7 1 5 3 1.3-2 3-3 5-3 2.7 0 5 2 5 5 0 4-3 7.5-10 13z" fill="#f25ca8"/><path d="M8 8l.8 2.2L11 11l-2.2.8L8 14l-.8-2.2L5 11l2.2-.8zM16 3l.6 1.6 1.6.6-1.6.6L16 7.5l-.6-1.7-1.6-.6 1.6-.6z" fill="#ffe066"/></svg>
<svg class="abs" style="left:828px;top:918px" width="24" height="24" viewBox="0 0 24 24"><path d="M3 11h4v11H3z" fill="#f5a623"/><path d="M8 11l4-7c.6-1.3 2.8-1 2.8.6V9h5.2c1.4 0 2.3 1.2 2 2.4l-2 8.6c-.3 1.2-1.2 2-2.4 2H8z" fill="#ffc83d"/><path d="M13 13h7M13 16h6.5M13 19h6" stroke="#e09a20" stroke-width="1.2"/></svg>
<svg class="abs" style="left:868px;top:918px" width="24" height="24" viewBox="0 0 24 24"><path d="M2 22l5-14 9 9z" fill="#f5a623"/><path d="M4.5 15l4.5 4.5M6 11l7 7" stroke="#e05050" stroke-width="1.6"/><path d="M12 3c2 1 0 3 2 4s3-2 4 0M16 10c2-1 3 1 5 0" fill="none" stroke="#f25ca8" stroke-width="1.6"/><circle cx="10" cy="4" r="1.2" fill="#4aa8ff"/><circle cx="20" cy="5" r="1.2" fill="#ffe066"/><circle cx="19" cy="15" r="1.2" fill="#4aa8ff"/><circle cx="15" cy="3" r="1" fill="#e05050"/></svg>
<svg class="abs" style="left:908px;top:918px" width="24" height="24" viewBox="0 0 24 24"><path d="M5 20c-3-3-3-7 0-10l6-6c1-1 2.5 0 1.7 1.3L10 8l5-4.5c1-.8 2.3.4 1.5 1.4l-4 4.6 4.5-3.8c1-.8 2.2.4 1.4 1.4L14 12l3-2.3c1-.7 2 .5 1.3 1.4L13 17c-3 3-6 5-8 3z" fill="#ffc83d"/><path d="M18 2l1 2M21 4l-2 1M4 20l-2 1M3 17l-2-.5" stroke="#ddd" stroke-width="1"/></svg>
<svg class="abs" style="left:948px;top:918px" width="24" height="24" viewBox="0 0 24 24"><circle cx="12" cy="12" r="10.5" fill="url(#yf)"/><path d="M6 9.5q2-2 4 0M14 9.5q2-2 4 0" fill="none" stroke="#5a3a10" stroke-width="1.5"/><path d="M6 13h12c0 4-3 6-6 6s-6-2-6-6z" fill="#5a2a10"/><path d="M8 17q4 2 8 0" fill="#ff7a8a"/><path d="M2 11c-1 2-1 4 1 4 1.5 0 2-2 1-4zM22 11c1 2 1 4-1 4-1.5 0-2-2-1-4z" fill="#4aa8ff"/></svg>
<svg class="abs" style="left:988px;top:918px" width="24" height="24" viewBox="0 0 24 24"><circle cx="12" cy="12" r="10.5" fill="url(#yf)"/><ellipse cx="8.5" cy="9.5" rx="1.3" ry="1.8" fill="#5a3a10"/><ellipse cx="15.5" cy="9.5" rx="1.3" ry="1.8" fill="#5a3a10"/><ellipse cx="12" cy="16" rx="3" ry="3.5" fill="#5a2a10"/></svg>
<svg class="abs" style="left:1028px;top:918px" width="24" height="24" viewBox="0 0 24 24"><circle cx="12" cy="12" r="10.5" fill="url(#yf)"/><circle cx="8.5" cy="10" r="1.4" fill="#5a3a10"/><circle cx="15.5" cy="10" r="1.4" fill="#5a3a10"/><path d="M8.5 17q3.5-3 7 0" fill="none" stroke="#5a3a10" stroke-width="1.6"/><path d="M6 13c-1.5 3-1.5 6 .5 6S8.5 16 6 13z" fill="#4aa8ff"/></svg>
<svg class="abs" style="left:1068px;top:918px" width="24" height="24" viewBox="0 0 24 24"><circle cx="13" cy="11" r="10" fill="url(#yf)"/><path d="M8 7q2-2 4 0M15 6.5q2-1 3.5.5" fill="none" stroke="#5a3a10" stroke-width="1.4"/><circle cx="10" cy="10" r="1.2" fill="#5a3a10"/><circle cx="16.5" cy="10" r="1.2" fill="#5a3a10"/><path d="M11 15.5l5-1" stroke="#5a3a10" stroke-width="1.5"/><path d="M3 16c2-1 6-1 8 0 1.5 1 0 3-1.5 2.5L8 18c0 2-1 4-3 4-2 0-3-3-2-6z" fill="#f5a623"/></svg>
<svg class="abs" style="left:1108px;top:918px" width="24" height="24" viewBox="0 0 24 24"><path d="M3 2h4v11H3z" fill="#f5a623"/><path d="M8 13l4 7c.6 1.3 2.8 1 2.8-.6V15h5.2c1.4 0 2.3-1.2 2-2.4l-2-8.6c-.3-1.2-1.2-2-2.4-2H8z" fill="#ffc83d"/><path d="M13 11h7M13 8h6.5M13 5h6" stroke="#e09a20" stroke-width="1.2"/></svg>
<!-- meeting info -->
<div class="abs" style="left:24px;top:981px;font-size:15px;letter-spacing:-0.4px;font-weight:bold;color:#e3e3e3;white-space:nowrap">14:14</div>
<div class="abs" style="left:72px;top:980px;width:1px;height:20px;background:#9a9a9a"></div>
<div class="abs" style="left:86px;top:981px;font-size:16px;letter-spacing:0.25px;font-weight:bold;color:#e3e3e3;white-space:nowrap">buk-tqvv-pwi</div>
<!-- controls -->
<div class="abs" style="left:678px;top:966px;width:60px;height:48px;border-radius:12px 0 0 12px;background:#601410"></div>
<svg class="abs" style="left:694px;top:982px" width="16" height="16" viewBox="0 0 16 16"><path d="M3 10.5l5-5 5 5" fill="none" stroke="#f9dedc" stroke-width="2.2"/></svg>
<div class="abs" style="left:718px;top:966px;width:48px;height:48px;border-radius:12px;background:#f9dedc"></div>
<svg class="abs" style="left:729px;top:977px" width="26" height="26" viewBox="0 0 26 26"><g fill="none" stroke="#410e0b" stroke-width="2"><path d="M10 10V7a3 3 0 0 1 6 0v6M16 15.5a3 3 0 0 1-6-1"/><path d="M7 12a6 6 0 0 0 10.5 4M19 12a6 6 0 0 1-.5 2.5M13 18v4"/><path d="M5 4l17 18" stroke-width="2.2"/></g></svg>
<div class="abs" style="left:774px;top:966px;width:88px;height:48px;border-radius:24px;background:#28292b"></div>
<div class="abs" style="left:814px;top:966px;width:48px;height:48px;border-radius:24px;background:#333537"></div>
<svg class="abs" style="left:789px;top:982px" width="16" height="16" viewBox="0 0 16 16"><path d="M3.5 10l4.5-4.5 4.5 4.5" fill="none" stroke="#8a8c8e" stroke-width="2"/></svg>
<svg class="abs" style="left:826px;top:978px" width="24" height="24" viewBox="0 0 24 24"><rect x="2" y="5" width="14" height="14" rx="1" fill="none" stroke="#e3e3e3" stroke-width="2.2"/><path d="M16.5 10l5-4v12l-5-4z" fill="#e3e3e3"/></svg>
<div class="abs" style="left:870px;top:966px;width:56px;height:48px;border-radius:24px;background:#333537"></div>
<svg class="abs" style="left:885px;top:978px" width="26" height="24" viewBox="0 0 26 24"><rect x="4" y="3" width="18" height="14" fill="none" stroke="#e3e3e3" stroke-width="2"/><path d="M2 21h22" stroke="#e3e3e3" stroke-width="2"/><path d="M13 15V7" stroke="#e3e3e3" stroke-width="2"/><path d="M9 11l4-4.5 4 4.5z" fill="#e3e3e3"/></svg>
<div class="abs" style="left:934px;top:966px;width:56px;height:48px;border-radius:12px;background:#a8c7fa"></div>
<svg class="abs" style="left:950px;top:978px" width="24" height="24" viewBox="0 0 24 24"><circle cx="12" cy="12" r="9" fill="none" stroke="#0842a0" stroke-width="2"/><circle cx="9" cy="10" r="1.5" fill="#0842a0"/><circle cx="15" cy="10" r="1.5" fill="#0842a0"/><path d="M7.5 13.5h9a4.5 4.5 0 0 1-9 0z" fill="#0842a0"/></svg>
<div class="abs" style="left:998px;top:966px;width:56px;height:48px;border-radius:24px;background:#333537"></div>
<svg class="abs" style="left:1016px;top:981px" width="20" height="18" viewBox="0 0 20 18"><rect x="1" y="1" width="18" height="15" fill="none" stroke="#e3e3e3" stroke-width="2"/><path d="M9 6H5.5v5H9M15 6h-3.5v5H15" fill="none" stroke="#e3e3e3" stroke-width="1.8"/></svg>
<div class="abs" style="left:1062px;top:966px;width:56px;height:48px;border-radius:24px;background:#333537"></div>
<svg class="abs" style="left:1077px;top:976px" width="26" height="28" viewBox="0 0 26 28"><path d="M8 14V6a1.6 1.6 0 0 1 3.2 0v7M11.2 12V3.5a1.6 1.6 0 0 1 3.2 0V12M14.4 12V4.5a1.6 1.6 0 0 1 3.2 0V13M17.6 13V7.5a1.6 1.6 0 0 1 3.2 0V17a9 9 0 0 1-9 9c-3 0-5-1.5-6.5-3.5L2 16.5c-.8-1 .5-2.5 1.7-1.7L8 18" fill="none" stroke="#e3e3e3" stroke-width="2" stroke-linejoin="round"/></svg>
<div class="abs" style="left:1126px;top:966px;width:37px;height:48px;border-radius:18px;background:#333537"></div>
<svg class="abs" style="left:1139px;top:980px" width="10" height="20" viewBox="0 0 10 20"><circle cx="5" cy="4.2" r="2.3" fill="#e3e3e3"/><circle cx="5" cy="10" r="2.3" fill="#e3e3e3"/><circle cx="5" cy="15.8" r="2.3" fill="#e3e3e3"/></svg>
<div class="abs" style="left:1170px;top:966px;width:72px;height:48px;border-radius:24px;background:#dc362e"></div>
<svg class="abs" style="left:1192px;top:982px" width="28" height="16" viewBox="0 0 28 16"><path d="M2 9.5C8 3 20 3 26 9.5l-2.8 3.2-4.5-1.8V8C16 7 12 7 9.3 8v2.9l-4.5 1.8z" fill="#fff"/></svg>
<!-- right icons -->
<svg class="abs" style="left:1776px;top:978px" width="24" height="24" viewBox="0 0 24 24"><circle cx="12" cy="12" r="9.2" fill="none" stroke="#fff" stroke-width="2.2"/><path d="M12 10.5v6.5" stroke="#fff" stroke-width="2.4"/><rect x="10.8" y="6.5" width="2.4" height="2.4" fill="#fff"/></svg>
<svg class="abs" style="left:1824px;top:978px" width="24" height="24" viewBox="0 0 24 24"><path d="M2.3 20.5V3.2h19.4v13.6H6z" fill="none" stroke="#fff" stroke-width="2.2" stroke-linejoin="round"/><path d="M5.5 6.5h12M5.5 9.4h12M5.5 12.3h8" stroke="#fff" stroke-width="1.6"/></svg>
<svg class="abs" style="left:1874px;top:980px" width="20" height="20" viewBox="0 0 20 20"><g fill="#fff"><circle cx="3.8" cy="3.8" r="2.3"/><circle cx="9.9" cy="3.8" r="2.3"/><circle cx="16" cy="3.8" r="2.3"/><circle cx="3.8" cy="9.9" r="2.3"/><circle cx="9.9" cy="9.9" r="2.3"/><circle cx="16" cy="9.9" r="2.3"/><circle cx="3.8" cy="16" r="2.3"/><circle cx="9.9" cy="16" r="2.3"/><circle cx="16" cy="16" r="2.3"/></g></svg>
<div id="taskbar" class="abs">
  <!-- windows logo -->
  <svg class="abs" style="left:20px;top:15px" width="21" height="21" viewBox="0 0 21 21"><g fill="#fff"><path d="M0 3l8.5-1.2V10H0z"/><path d="M9.5 1.7L21 0v10H9.5z"/><path d="M0 11h8.5v8.2L0 18z"/><path d="M9.5 11H21v10L9.5 19.3z"/></g></svg>
  <!-- explorer -->
  <div class="abs" style="left:69px;top:47px;width:51px;height:3px;background:#76b9ed"></div>
  <svg class="abs" style="left:80px;top:14px" width="28" height="24" viewBox="0 0 28 24"><path d="M1 2h9l2 2h15v18H1z" fill="#e8a317"/><path d="M1 7h26v15H1z" fill="#ffd35c"/><path d="M7 13h14v9h-3v-5h-8v5H7z" fill="#3b8fd8"/></svg>
  <!-- avast -->
  <div class="abs" style="left:142px;top:11px;width:27px;height:27px;border-radius:50%;background:conic-gradient(from 0deg,#8a5cf0 0deg 100deg,#f5c030 100deg 200deg,#f07010 200deg 300deg,#f89020 300deg 360deg)"></div>
  <svg class="abs" style="left:148px;top:16px" width="16" height="18" viewBox="0 0 16 18"><path d="M8 1l6.5 3v5c0 4-3 7-6.5 8.5C4.5 16 1.5 13 1.5 9V4z" fill="#fff"/><circle cx="8" cy="8" r="1.8" fill="#2a2f50"/><path d="M7 9h2l.5 4h-3z" fill="#2a2f50"/></svg>
  <!-- chrome active -->
  <div class="abs" style="left:188px;top:0;width:61px;height:50px;background:#46535a"></div>
  <div class="abs" style="left:188px;top:47px;width:61px;height:3px;background:#76b9ed"></div>
  <div class="abs" style="left:203px;top:10px;width:30px;height:30px;border-radius:50%;background:conic-gradient(from -60deg,#db4437 0 120deg,#f4b400 120deg 240deg,#0f9d58 240deg 360deg)"></div>
  <div class="abs" style="left:211px;top:18px;width:14px;height:14px;border-radius:50%;background:#3c7ff0;box-shadow:0 0 0 2.5px #fff"></div>
  <!-- telegram -->
  <div class="abs" style="left:254px;top:47px;width:52px;height:3px;background:#76b9ed"></div>
  <div class="abs" style="left:266px;top:11px;width:28px;height:28px;border-radius:50%;background:#2a9fd8"></div>
  <svg class="abs" style="left:270px;top:17px" width="20" height="16" viewBox="0 0 20 16"><path d="M1 7.5L18 1l-3 14-5-4-3 3v-4l8-7-10 6z" fill="#fff"/></svg>
  <div class="abs" style="left:277px;top:28px;width:21px;height:14px;border-radius:4px;background:#e53935;color:#fff;font-size:10px;line-height:14px;text-align:center;font-weight:bold">117</div>
  <!-- viber -->
  <div class="abs" style="left:317px;top:47px;width:51px;height:3px;background:#76b9ed"></div>
  <div class="abs" style="left:328px;top:10px;width:28px;height:26px;border-radius:9px 9px 9px 4px;background:#7360f2;box-shadow:0 0 0 1.5px #fff"></div>
  <div class="abs" style="left:331px;top:33px;width:6px;height:6px;background:#7360f2;clip-path:polygon(0 0,100% 0,0 100%)"></div>
  <svg class="abs" style="left:333px;top:14px" width="18" height="16" viewBox="0 0 18 16"><path d="M3 3c1-1 2-1 2.5 0l1 2c.3.6 0 1-.5 1.5.5 1.5 2 3 3.5 3.5.5-.5 1-.8 1.5-.5l2 1c1 .5 1 1.5 0 2.5-1 1-3 1-6-1.5S2 5 3 3z" fill="#fff"/><path d="M10 3a4 4 0 0 1 4 4M10 1a6 6 0 0 1 6 6" fill="none" stroke="#d8d0ff" stroke-width="1"/></svg>
  <div class="abs" style="left:339px;top:22px;width:20px;height:20px;border-radius:6px;background:#e53935;color:#fff;font-size:14px;line-height:20px;text-align:center">1</div>
  <!-- word -->
  <div class="abs" style="left:378px;top:47px;width:52px;height:3px;background:#76b9ed"></div>
  <div class="abs" style="left:397px;top:13px;width:21px;height:24px;background:#fff;border-radius:1px"></div>
  <div class="abs" style="left:400px;top:17px;width:15px;height:16px;background:repeating-linear-gradient(180deg,#2b579a 0 2px,#fff 2px 4px)"></div>
  <div class="abs" style="left:390px;top:12px;width:19px;height:26px;background:#2b579a;border-radius:2px;color:#fff;font-size:12px;font-weight:bold;line-height:26px;text-align:center">W</div>
  <!-- tray -->
  <div class="abs" style="left:1427px;top:15px;width:21px;height:21px;border-radius:50%;background:#f97316"></div>
  <svg class="abs" style="left:1430px;top:19px" width="15" height="13" viewBox="0 0 15 13"><path d="M2 12L8 2l5 10M4 8h7M6 12l2-5 3 5" fill="none" stroke="#fff" stroke-width="1.6"/></svg>
  <div class="abs" style="left:1458px;top:15px;width:20px;height:19px;border-radius:7px 7px 7px 3px;background:#8a72f0;box-shadow:0 0 0 1px #e8e0ff"></div>
  <svg class="abs" style="left:1461px;top:18px" width="13" height="12" viewBox="0 0 18 16"><path d="M3 3c1-1 2-1 2.5 0l1 2c.3.6 0 1-.5 1.5.5 1.5 2 3 3.5 3.5.5-.5 1-.8 1.5-.5l2 1c1 .5 1 1.5 0 2.5-1 1-3 1-6-1.5S2 5 3 3z" fill="#fff"/></svg>
  <div class="abs" style="left:1472px;top:13px;width:8px;height:8px;border-radius:50%;background:#e02020"></div>
  <svg class="abs" style="left:1488px;top:16px" width="20" height="20" viewBox="0 0 20 20"><path d="M1 9L19 2l-5 15-4-5z" fill="#fff"/><circle cx="4" cy="17" r="2.5" fill="#e02020"/></svg>
  <div class="abs" style="left:1518px;top:15px;width:20px;height:20px;background:linear-gradient(135deg,#4aa8e8,#2a70c8);border-radius:2px"></div>
  <div class="abs" style="left:1522px;top:19px;width:12px;height:12px;background:#d0e8f8;opacity:.7"></div>
  <div class="abs" style="left:1548px;top:15px;width:20px;height:20px;background:#000"></div>
  <div class="abs" style="left:1551px;top:19px;width:14px;height:12px;background:#fff;border-radius:2px"></div>
  <div class="abs" style="left:1556px;top:19px;width:4px;height:12px;background:#000"></div>
  <div class="abs" style="left:1578px;top:15px;width:20px;height:16px;background:#808080;border:1.5px solid #1a1a9a"></div>
  <div class="abs" style="left:1578px;top:33px;width:8px;height:3px;background:#888"></div>
  <div class="abs" style="left:1590px;top:33px;width:8px;height:3px;background:#888"></div>
  <svg class="abs" style="left:1609px;top:14px" width="16" height="24" viewBox="0 0 16 24"><rect x="5" y="1" width="6" height="13" rx="3" fill="#fff"/><path d="M2 10a6 6 0 0 0 12 0M8 16v5M4 22h8" fill="none" stroke="#fff" stroke-width="1.4"/></svg>
  <svg class="abs" style="left:1637px;top:17px" width="22" height="16" viewBox="0 0 22 16"><rect x="1" y="3" width="17" height="10" fill="none" stroke="#fff" stroke-width="1.4"/><rect x="3" y="5" width="13" height="6" fill="#fff"/><rect x="18.5" y="6" width="2" height="4" fill="#fff"/></svg>
  <svg class="abs" style="left:1667px;top:14px" width="22" height="22" viewBox="0 0 22 22"><g fill="none" stroke="#fff" stroke-width="1.4"><path d="M2 12a14 14 0 0 1 14-10M5 15a10 10 0 0 1 10-8M8 18a6 6 0 0 1 6-5"/></g><circle cx="15" cy="19" r="1.8" fill="#fff"/></svg>
  <svg class="abs" style="left:1695px;top:14px" width="26" height="22" viewBox="0 0 26 22"><path d="M2 8h4l5-5v16l-5-5H2z" fill="none" stroke="#fff" stroke-width="1.4"/><path d="M14 8a4 4 0 0 1 0 6M17 5a8 8 0 0 1 0 12M20 2a12 12 0 0 1 0 18" fill="none" stroke="#fff" stroke-width="1.4"/></svg>
  <div class="abs" style="left:1732px;top:17px;font-size:15px;color:#fff;white-space:nowrap">УКР</div>
  <div class="abs" style="left:1770px;top:5px;width:82px;text-align:center;font-size:15px;color:#fff;white-space:nowrap;line-height:18px">14:14<br><span style="display:inline-block;margin-top:4px">12.02.2026</span></div>
  <svg class="abs" style="left:1868px;top:14px" width="24" height="22" viewBox="0 0 24 22"><path d="M2 2h20v14H9l-4 4v-4H2z" fill="#fff"/><path d="M6 6h12M6 9h12M6 12h8" stroke="#222" stroke-width="1.2"/></svg>
  <div class="abs" style="left:1878px;top:22px;width:21px;height:21px;border-radius:50%;background:#2a2f33;border:1.5px solid #bbb;color:#fff;font-size:13px;line-height:18px;text-align:center">3</div>
  <div class="abs" style="left:1913px;top:0;width:1px;height:50px;background:#6a7478"></div>
</div>

</body></html>
